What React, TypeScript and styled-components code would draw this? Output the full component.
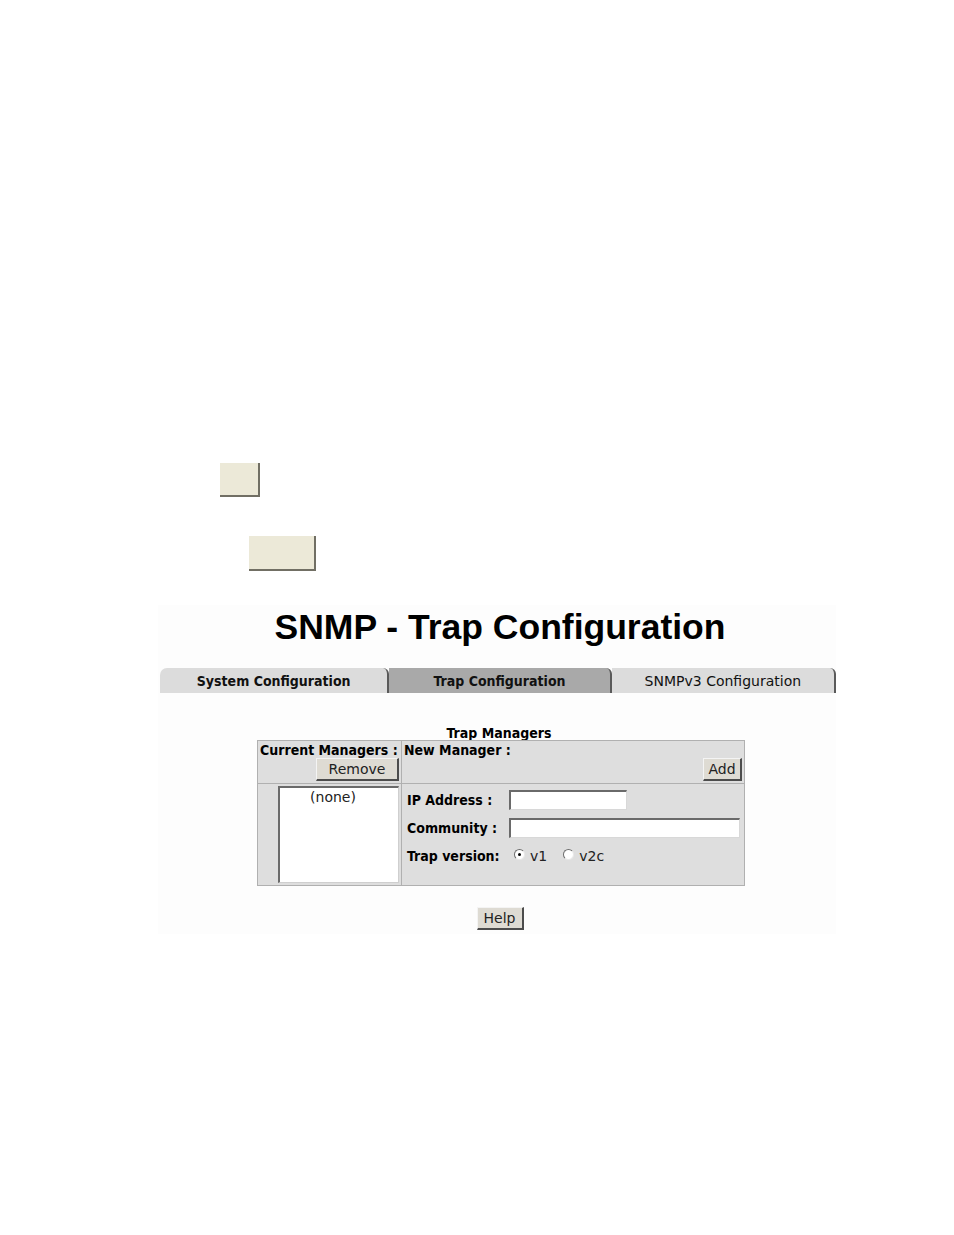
import React from "react";
import styled, { createGlobalStyle } from "styled-components";

const GlobalStyle = createGlobalStyle`
  html, body {
    margin: 0;
    padding: 0;
    background: #ffffff;
  }
  body {
    font-family: "DejaVu Sans", Verdana, sans-serif;
    color: #000;
  }
`;

const Page = styled.div`
  width: 954px;
  height: 1235px;
  padding-top: 463px;
  box-sizing: border-box;
`;

const BlankButton = styled.div<{ w: number; h: number; left: number; gap: number }>`
  width: ${p => p.w}px;
  height: ${p => p.h}px;
  margin-left: ${p => p.left}px;
  margin-bottom: ${p => p.gap}px;
  box-sizing: border-box;
  background: #ece9d8;
  border-right: 2px solid #716f64;
  border-bottom: 2px solid #716f64;
`;

const Panel = styled.div`
  width: 678px;
  margin-left: 158px;
  padding: 2px 0 4px;
  background: #fdfdfd;
  display: flex;
  flex-direction: column;
  align-items: center;
`;

const Title = styled.h1`
  margin: 0;
  height: 40px;
  line-height: 40px;
  font-family: "Liberation Sans", Arial, sans-serif;
  font-weight: bold;
  font-size: 35.5px;
  padding-left: 6px;
`;

const Tabs = styled.div`
  margin-top: 21px;
  align-self: stretch;
  margin-left: 2px;
  display: flex;
  height: 25px;
`;

const Tab = styled.div<{ active?: boolean; bold?: boolean; first?: boolean; w: number }>`
  width: ${p => p.w}px;
  box-sizing: border-box;
  display: flex;
  align-items: center;
  justify-content: center;
  padding-top: 1px;
  font-size: 14px;
  font-stretch: ${p => (p.bold ? "condensed" : "normal")};
  font-weight: ${p => (p.bold ? "bold" : "normal")};
  color: #111;
  background: ${p => (p.active ? "#a9a9a9" : "#dcdcdc")};
  border-top-left-radius: ${p => (p.first ? "7px" : "0")};
  border-top-right-radius: 6px;
  border-right: 2px solid #5a5a5a;
`;

const Caption = styled.div`
  margin-top: 33px;
  font-size: 14px;
  font-stretch: condensed;
  font-weight: bold;
  line-height: 14px;
  padding-left: 4px;
`;

const Grid = styled.table`
  margin-left: 8px;
  width: 488px;
  border: 1px solid #a5a5a5;
  border-collapse: collapse;
  background: #dedede;
  font-size: 14px;
`;

const Cell = styled.td<{ w?: number; h: number }>`
  ${p => (p.w ? `width: ${p.w}px;` : "")}
  height: ${p => p.h}px;
  border: 1px solid #b0b0b0;
  padding: 2px;
  vertical-align: top;
  box-sizing: border-box;
`;

const HeadCell = styled.div`
  display: flex;
  flex-direction: column;
  height: 38px;
  justify-content: space-between;
`;

const Label = styled.span`
  font-weight: bold;
  font-stretch: condensed;
  font-size: 14px;
  line-height: 14px;
  white-space: nowrap;
`;

const Button = styled.button<{ w: number }>`
  width: ${p => p.w}px;
  height: 23px;
  align-self: flex-end;
  background: #dedbd3;
  border: none;
  border-top: 1px solid #f4f4f4;
  border-left: 1px solid #f4f4f4;
  border-right: 2px solid #4c4c4c;
  border-bottom: 2px solid #4c4c4c;
  font-family: "DejaVu Sans", Verdana, sans-serif;
  font-size: 14px;
  color: #222;
  padding: 0 0 1px;
`;

const ListBox = styled.div`
  margin-left: auto;
  width: 121px;
  height: 97px;
  box-sizing: border-box;
  background: #fff;
  border-top: 2px solid #6a6a6a;
  border-left: 2px solid #6a6a6a;
  border-right: 1px solid #cfcfcf;
  border-bottom: 1px solid #cfcfcf;
  text-align: center;
  padding: 1px 12px 0 0;
  font-size: 14px;
  line-height: 16px;
  color: #222;
`;

const Form = styled.div`
  display: flex;
  flex-direction: column;
  gap: 8px;
  padding: 4px 0 0 3px;
`;

const FormRow = styled.div`
  display: flex;
  align-items: center;
  height: 20px;
`;

const FormLabel = styled(Label)<{ w: number }>`
  width: ${p => p.w}px;
`;

const TextInput = styled.div<{ w: number }>`
  width: ${p => p.w}px;
  height: 20px;
  box-sizing: border-box;
  background: #fff;
  border-top: 2px solid #6a6a6a;
  border-left: 2px solid #6a6a6a;
  border-right: 1px solid #d8d8d8;
  border-bottom: 1px solid #d8d8d8;
`;

const Radio = styled.span<{ checked?: boolean }>`
  width: 11px;
  height: 11px;
  box-sizing: border-box;
  border-radius: 50%;
  background: #fff;
  border: 1px solid;
  border-color: #6d6d6d #e8e8e8 #e8e8e8 #6d6d6d;
  display: inline-flex;
  align-items: center;
  justify-content: center;
  margin: -4px 5px 0 0;
  &::after {
    content: "";
    width: 3px;
    height: 3px;
    border-radius: 50%;
    background: ${p => (p.checked ? "#000" : "transparent")};
  }
`;

const RadioText = styled.span`
  font-size: 14px;
  color: #222;
  margin-right: 16px;
`;

const HelpButton = styled(Button)`
  align-self: center;
  margin-top: 21px;
  margin-left: 6px;
`;

export default function App() {
  return (
    <>
      <GlobalStyle />
      <Page>
        <BlankButton w={40} h={34} left={220} gap={39} />
        <BlankButton w={67} h={35} left={249} gap={34} />
        <Panel>
          <Title>SNMP - Trap Configuration</Title>
          <Tabs>
            <Tab first bold w={230}>System Configuration</Tab>
            <Tab active bold w={223}>Trap Configuration</Tab>
            <Tab w={225}>SNMPv3 Configuration</Tab>
          </Tabs>
          <Caption>Trap Managers</Caption>
          <Grid>
            <tbody>
              <tr>
                <Cell w={144} h={42}>
                  <HeadCell>
                    <Label>Current Managers :</Label>
                    <Button w={83}>Remove</Button>
                  </HeadCell>
                </Cell>
                <Cell h={42}>
                  <HeadCell>
                    <Label>New Manager :</Label>
                    <Button w={39}>Add</Button>
                  </HeadCell>
                </Cell>
              </tr>
              <tr>
                <Cell w={144} h={102}>
                  <ListBox>(none)</ListBox>
                </Cell>
                <Cell h={102}>
                  <Form>
                    <FormRow>
                      <FormLabel w={102}>IP Address :</FormLabel>
                      <TextInput w={118} />
                    </FormRow>
                    <FormRow>
                      <FormLabel w={102}>Community :</FormLabel>
                      <TextInput w={231} />
                    </FormRow>
                    <FormRow>
                      <FormLabel w={107}>Trap version:</FormLabel>
                      <Radio checked />
                      <RadioText>v1</RadioText>
                      <Radio />
                      <RadioText>v2c</RadioText>
                    </FormRow>
                  </Form>
                </Cell>
              </tr>
            </tbody>
          </Grid>
          <HelpButton w={47}>Help</HelpButton>
        </Panel>
      </Page>
    </>
  );
}
